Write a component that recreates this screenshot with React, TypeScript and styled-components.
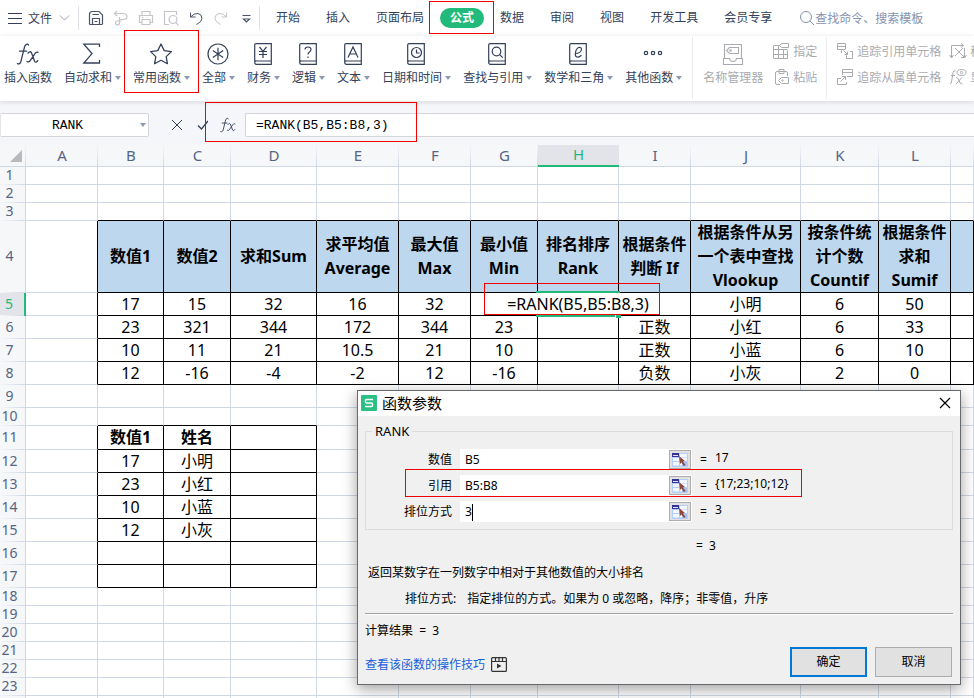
import React from "react";
import styled, { createGlobalStyle, css } from "styled-components";

const ink = "#333f59";
const muted = "#a9abb0";
const green = "#22ba7b";
const gridLine = "#d0d8e6";
const ui = '"Noto Sans", "Noto Sans CJK SC", sans-serif';

const GlobalStyle = createGlobalStyle`
  * { box-sizing: border-box; }
  body { margin: 0; font-family: ${ui}; font-size: 12px; color: ${ink}; background: #fff; }
  button, input { font: inherit; color: inherit; }
  button { background: none; border: 0; padding: 0; cursor: pointer; white-space: nowrap; }
  svg { display: block; flex: none; fill: none; stroke: currentColor; }
`;

const Window = styled.div`
  position: relative;
  display: flex;
  flex-direction: column;
  height: 100vh;
  overflow: hidden;
`;

/* Red annotation frame laid over the part it surrounds */
const Marker = styled.span<{ $top: number; $right: number; $bottom: number; $left: number }>`
  position: absolute;
  z-index: 4;
  top: ${(p) => p.$top}px;
  right: ${(p) => p.$right}px;
  bottom: ${(p) => p.$bottom}px;
  left: ${(p) => p.$left}px;
  border: 1px solid #f20000;
  pointer-events: none;
`;

/* ---------- menu bar ---------- */

const MenuBar = styled.nav`
  display: flex;
  align-items: center;
  height: 36px;
  padding-left: 8px;
`;

const FileButton = styled.button`
  display: flex;
  align-items: center;
  gap: 6px;
  margin-right: 8px;
`;

const BarRule = styled.span`
  width: 1px;
  height: 24px;
  background: #dfe2e8;
`;

const QuickTools = styled.div`
  display: flex;
  align-items: center;
  gap: 9px;
  padding: 0 5px 0 9px;
`;

const QuickButton = styled.button<{ $dim?: boolean }>`
  color: ${(p) => (p.$dim ? "#c3c5c9" : "#4a5268")};
`;

const TabList = styled.div`
  display: flex;
  align-items: center;
  padding-left: 3px;
`;

const TabSlot = styled.div`
  position: relative;
  margin: 0 3px;
`;

const Tab = styled.button<{ $active?: boolean }>`
  height: 20px;
  padding: 0 10px;
  border-radius: 10px;
  line-height: 20px;
  ${(p) => p.$active && css`background: ${green}; color: #fff; font-weight: 700;`}
`;

const Search = styled.label`
  display: flex;
  flex: 1;
  align-items: center;
  min-width: 0;
  margin-left: 14px;
  color: #8592ad;
  input {
    flex: 1;
    min-width: 0;
    padding: 0;
    border: 0;
    outline: 0;
    background: none;
  }
  input::placeholder { color: #8592ad; opacity: 1; }
`;

/* ---------- ribbon ---------- */

const Ribbon = styled.div`
  position: relative;
  z-index: 1;
  display: flex;
  height: 65px;
  white-space: nowrap;
  box-shadow: 0 1px 5px rgba(60, 70, 90, 0.18);
`;

const Tools = styled.div`
  display: flex;
  gap: 2px;
  margin-left: -1px;
`;

const Tool = styled.button<{ $dim?: boolean }>`
  position: relative;
  display: flex;
  flex-direction: column;
  align-items: center;
  gap: 2px;
  padding: 5px 5px 0;
  color: ${(p) => (p.$dim ? muted : ink)};
`;

const ToolLabel = styled.span`
  display: flex;
  align-items: center;
  gap: 3px;
  line-height: 18px;
`;

const Caret = styled.span`
  width: 6px;
  border: 3px solid transparent;
  border-top: 4px solid #8d99b3;
  border-bottom: 0;
`;

const RibbonRule = styled.span`
  flex: none;
  width: 1px;
  height: 62px;
  margin: 1px 5px 0;
  background: #e9ebef;
`;

const ToolPairs = styled.div<{ $width: number }>`
  display: flex;
  flex: none;
  flex-direction: column;
  gap: 6px;
  width: ${(p) => p.$width}px;
  padding: 5px 0 0 4px;
  color: ${muted};
`;

const SmallTool = styled.button`
  display: flex;
  align-items: center;
  gap: 3px;
  height: 20px;
`;

/* ---------- formula bar ---------- */

const FormulaBar = styled.div`
  position: relative;
  display: flex;
  align-items: center;
  height: 44px;
  padding-bottom: 8px;
  padding-top: 12px;
  background: #f5f6f9;
`;

const mono = '"Liberation Mono", "Noto Sans CJK SC", monospace';

const NameBox = styled.label`
  display: flex;
  align-items: center;
  width: 149px;
  height: 24px;
  padding-right: 2px;
  border: 1px solid #d3d5da;
  border-left-color: #e3e5e9;
  border-radius: 2px;
  background: #fff;
  input {
    flex: 1;
    min-width: 0;
    padding: 0 6px 0 0;
    border: 0;
    outline: 0;
    background: none;
    color: #000;
    font: 13px ${mono};
    text-align: center;
  }
`;

const FormulaButtons = styled.div`
  display: flex;
  flex: none;
  align-items: center;
  justify-content: space-between;
  width: 96px;
  padding: 0 8px 0 22px;
`;

const FormulaInput = styled.input`
  flex: 1;
  min-width: 0;
  height: 24px;
  padding: 0 10px;
  border: 1px solid #d3d5da;
  border-right: 0;
  border-radius: 2px 0 0 2px;
  outline: 0;
  background: #fff;
  color: #000;
  font: 13px ${mono};
`;

const FormulaMark = styled.span`
  position: absolute;
  top: 1px;
  bottom: 3px;
  left: 205px;
  z-index: 4;
  width: 212px;
  border: 1px solid #f20000;
  pointer-events: none;
`;

/* ---------- sheet ---------- */

const Sheet = styled.main`
  flex: 1;
  min-height: 0;
  overflow: hidden;
`;

const Grid = styled.table`
  width: 100%;
  table-layout: fixed;
  border-collapse: separate;
  border-spacing: 0;
`;

const Col = styled.col<{ $width?: number }>`
  width: ${(p) => (p.$width ? `${p.$width}px` : "auto")};
`;

const Row = styled.tr<{ $height: number }>`
  height: ${(p) => p.$height}px;
`;

const ColumnHead = styled.th<{ $active?: boolean }>`
  padding: 0 0 2px;
  border-bottom: ${(p) => (p.$active ? `2px solid ${green}` : `1px solid ${gridLine}`)};
  background: ${(p) =>
    p.$active
      ? "#e3e4ea"
      : `linear-gradient(#f5f6f9, ${gridLine}) right / 1px 100% no-repeat #f5f7f9`};
  color: ${(p) => (p.$active ? green : "#566585")};
  font-size: 15px;
  font-weight: 400;
  line-height: 18px;
  svg { margin: 2px 0 0 10px; stroke: none; }
`;

const RowHead = styled.th<{ $active?: boolean }>`
  padding: 0 6px 2px 0;
  border-right: ${(p) => (p.$active ? `2px solid ${green}` : `1px solid ${gridLine}`)};
  background: linear-gradient(to right, #f5f6f9, ${gridLine}) bottom / 100% 1px no-repeat
    ${(p) => (p.$active ? "#e3e4ea" : "#f5f7f9")};
  color: ${(p) => (p.$active ? green : "#566585")};
  font-size: 14px;
  font-weight: 400;
  line-height: 16px;
`;

const Cell = styled.td<{ $darkRight?: boolean; $darkBottom?: boolean; $fill?: boolean; $bold?: boolean }>`
  position: relative;
  padding: 0;
  border-right: 1px solid ${(p) => (p.$darkRight ? "#000" : gridLine)};
  border-bottom: 1px solid ${(p) => (p.$darkBottom ? "#000" : gridLine)};
  background: ${(p) => (p.$fill ? "#bdd7ee" : "#fff")};
  color: #000;
  font-size: 16px;
  font-weight: ${(p) => (p.$bold ? 700 : 400)};
  line-height: 17px;
  text-align: center;
  white-space: nowrap;
`;

const HeadText = styled.div`
  display: grid;
  align-content: center;
  justify-content: center;
  height: 71px;
  padding-bottom: 2px;
  line-height: 24px;
  white-space: pre;
`;

const Selection = styled.span`
  position: absolute;
  z-index: 1;
  inset: -2px;
  border: 2px solid ${green};
`;

const FillHandle = styled.span`
  position: absolute;
  z-index: 3;
  right: -3px;
  bottom: -3px;
  width: 6px;
  height: 3px;
  border-left: 1px solid #fff;
  background: ${green};
`;

const CellEditor = styled.input`
  position: absolute;
  z-index: 2;
  top: 0;
  left: -38px;
  width: 156px;
  height: 100%;
  padding: 0;
  border: 0;
  outline: 0;
  background: #fff;
  text-align: center;
`;

/* ---------- dialog ---------- */

const Dialog = styled.section`
  position: absolute;
  top: 390px;
  right: 13px;
  z-index: 10;
  width: 604px;
  border: 1px solid #68696b;
  background: #f0f0f0;
  color: #000;
  line-height: 16px;
  box-shadow: 0 4px 14px rgba(0, 0, 0, 0.38);
`;

const TitleBar = styled.header`
  display: flex;
  align-items: center;
  gap: 5px;
  height: 25px;
  padding: 0 9px 1px 3px;
  background: #fff;
  h2 { flex: 1; margin: 0; font-size: 15px; font-weight: 400; line-height: 20px; }
`;

const DialogBody = styled.form`
  padding: 7px;
`;

const Arguments = styled.fieldset`
  display: block;
  margin: 0;
  padding: 10px 0 7px;
  border: 1px solid #dcdcdc;
  legend { margin-left: 6px; padding: 0 3px; font-size: 13px; line-height: 16px; }
`;

const ArgRow = styled.div`
  position: relative;
  display: grid;
  grid-template-columns: 86px 232px 7px 1fr;
  column-gap: 8px;
  align-items: center;
  height: 21px;
  & + & { margin-top: 5px; }
  label { text-align: right; }
  output { padding-bottom: 4px; }
`;

const ArgField = styled.div`
  display: flex;
  align-items: center;
  height: 21px;
  padding-right: 1px;
  background: #fff;
  input { flex: 1; min-width: 0; padding: 0 5px; border: 0; outline: 0; background: none; }
`;

const Typed = styled.div`
  position: relative;
  display: flex;
  flex: 1;
  min-width: 0;
`;

const TextCursor = styled.span`
  position: absolute;
  top: 0;
  left: 12px;
  width: 1px;
  height: 17px;
  background: #000;
`;

const PickButton = styled.button`
  display: grid;
  place-items: center;
  width: 22px;
  height: 19px;
  border: 1px solid #adadad;
  background: #e1e1e1;
  svg { stroke: none; }
`;

const Total = styled.p`
  margin: 8px 0 11px 331px;
  white-space: pre;
`;

const Summary = styled.p`
  margin: 0 0 10px 3px;
`;

const Hint = styled.dl`
  display: flex;
  gap: 11px;
  margin: 0 0 6px 40px;
  dd { margin: 0; }
`;

const Divider = styled.hr`
  height: 2px;
  margin: 0 0 8px;
  border: 0;
  border-top: 1px solid #a0a0a0;
  border-bottom: 1px solid #fff;
`;

const Result = styled.p`
  margin: 0;
  white-space: pre;
`;

const Footer = styled.footer`
  display: flex;
  align-items: center;
  gap: 8px;
  margin-top: 8px;
  padding-right: 1px;
`;

const HelpLink = styled.a`
  display: flex;
  flex: 1;
  align-items: center;
  gap: 6px;
  padding-top: 5px;
  color: #1a5fdc;
  text-decoration: none;
  svg { color: #333; }
`;

const PushButton = styled.button<{ $primary?: boolean }>`
  width: 77px;
  height: 30px;
  border: ${(p) => (p.$primary ? "2px solid #0078d7" : "1px solid #adadad")};
  background: #e1e1e1;
`;

/* ---------- icons ---------- */

const Svg = ({ w, h = w, children, sw = 1 }: { w: number; h?: number; sw?: number; children: React.ReactNode }) => (
  <svg width={w} height={h} viewBox={`0 0 ${w} ${h}`} strokeWidth={sw} aria-hidden="true">
    {children}
  </svg>
);

const FxIcon = ({ w = 26, h = 26 }: { w?: number; h?: number }) => (
  <svg width={w} height={h} viewBox="0 0 26 26" strokeWidth="1.3" strokeLinecap="round" aria-hidden="true">
    <path d="M13.5 4C12.5 2.6 10.4 3 9.6 5.6L6 20.2C5.3 22.6 4 23.4 2.4 22.6M4.6 10.2h7" />
    <path d="M13 12.2c1-1.5 2.5-2 3.4-.6l3.2 8.6c.8 1.5 2 1.2 3.2-.5M23 11.3c-1.2-.6-2 .1-2.8 1L14.8 20c-.8 1-1.8 1.1-2.8.5" />
  </svg>
);

const Book = ({ children }: { children: React.ReactNode }) => (
  <Svg w={26}>
    <g transform="translate(3 2)" strokeWidth="1.2">
      <path d="M.7 18.5V2Q.7.7 2 .7H17.3V21.3H2.5Q.7 21.3.7 19.5T2.5 18H17" />
      {children}
    </g>
  </Svg>
);

const icons = {
  fx: <FxIcon />,
  sum: (
    <Svg w={26} sw={1.3}><path d="M19.5 6V3.2H3.8L12 12.6 3.8 22H19.5V19" /></Svg>
  ),
  star: (
    <Svg w={26} sw={1.3}>
      <path strokeLinejoin="round" d="M12 3l3.2 6.6 7.2 1-5.2 5 1.2 7.1L12 19.3l-6.4 3.4 1.2-7.1-5.2-5 7.2-1z" />
    </Svg>
  ),
  all: (
    <Svg w={26} sw={1.2}>
      <circle cx="12" cy="13" r="10" /><path d="M12 6.8v12.4M6.8 9.6l10.4 6.8M17.2 9.6L6.8 16.4" />
    </Svg>
  ),
  money: <Book><path d="M5.5 4L9 8.3 12.5 4M5 8.5h8M5 11.5h8M9 8.5V15" /></Book>,
  logic: <Book><path d="M6 6.5Q6 4 9 4t3 2.6q0 1.4-1.5 2.3T9 11.5M9 13.5v1.5" /></Book>,
  text: <Book><path d="M4 14.5L9 4l5 10.5M5.7 11h6.6" /></Book>,
  time: <Book><circle cx="9.5" cy="9.5" r="5" /><path d="M9.5 6.5V10H12.5" /></Book>,
  find: <Book><circle cx="8.5" cy="8.5" r="4.3" /><path d="M11.7 11.7l3 3" /></Book>,
  math: <Book><path d="M6 10.5C10 10.5 12.5 8.5 12.5 6.3S9.5 3.7 7.8 6 5.5 13.5 8 14s3.500-.8 4.500-2" /></Book>,
  more: (
    <Svg w={26} sw={1.2}><circle cx="5" cy="12" r="1.7" /><circle cx="12" cy="12" r="1.7" /><circle cx="19" cy="12" r="1.7" /></Svg>
  ),
  names: (
    <Svg w={26} sw={1.1}>
      <path d="M4.5 17.5V3.5h17v14M3.500 17.5h6q.5 3 3.500 3t3.500-3h6v6h-19z" />
      <path d="M9.500 6.500h9v6h-9l-3-3z" /><circle cx="10.500" cy="9.500" r=".8" />
    </Svg>
  ),
};

const assignIcon = (
  <Svg w={18}>
    <path d="M7.5 3.5h-6v13h14v-8M1.5 7.5h14M1.5 12.5h14M6.5 3.5v13M11.5 8v8.5M9.5 1.5h7v4h-7l-2-2z" />
  </Svg>
);
const pasteIcon = (
  <Svg w={18}>
    <path d="M8 16.5H5q-1.5 0-1.5-1.5V5q0-1.5 1.5-1.5h9q1.5 0 1.5 1.5v3M7 5.5h5v-4H7zM16.5 9.5v6h-7l-3-3 3-3z" /><circle cx="10.5" cy="12.5" r=".7" />
  </Svg>
);
const precedentIcon = (
  <Svg w={18}><path d="M9.5 7.5h-8v-6h8V7M1.5 4.5h8M5.5 8v3M10.5 16.5v-3M7.5 8.5l4 4M11.5 9.5v3h-3M14 9.5h2.5v7h-6v-2" /></Svg>
);
const dependentIcon = (
  <Svg w={18}><path d="M6.5 7V1.5h10v7H11M6.5 4.5h10M6.5 8.5H9M5 10.5H1.5v6h9V14M4.5 13.5l5-5M6 8.5h3.5V12" /></Svg>
);
const removeArrowsIcon = (
  <Svg w={18}><path d="M2.5 15V3.5H14M12 1.5l2.5 2-2.5 2M.5 13l2 3 2-3M6 6l8 8M14 6l-8 8M15.5 6v9.5H12M13.5 13l2 3 2-3" /></Svg>
);
const showFormulaIcon = (
  <Svg w={18}><path d="M6.5 3q-2-1-2.5 1.5L2.5 14q-.5 2-1.5 1.5M2 7.5h4M7 9.5l2 1 2.5 5 2 .5M13 9.5l-6 6.5" /><ellipse cx="12.5" cy="4.5" rx="4.5" ry="3" /><circle cx="12.5" cy="4.5" r="1.2" /></Svg>
);

const pickIcon = (
  <Svg w={16} h={14}>
    <rect width="16" height="14" fill="#b5cdfb" />
    <path d="M1 5h6v3H1zM1 9h6v3.5H1zM8 1h7v3.5H8zM8 5h7v3H8zM8 9h7v3.5H8z" fill="#f3f7ff" />
    <path d="M10 9h5v4h-5z" fill="#a6c1f2" />
    <path d="M0 0h7v4H0z" fill="#33339a" />
    <path d="M1 2h5v1H1z" fill="#e3e6f5" />
    <path d="M7 3l6 5-2 .4 2.5 3.6-1.6 1L9.5 9.4 8 11z" fill="#8e4b37" />
  </Svg>
);

/* ---------- data ---------- */

type ToolItem = { label: string; icon: React.ReactNode; menu?: boolean; marked?: boolean };

const tools: ToolItem[] = [
  { label: "插入函数", icon: icons.fx },
  { label: "自动求和", icon: icons.sum, menu: true },
  { label: "常用函数", icon: icons.star, menu: true, marked: true },
  { label: "全部", icon: icons.all, menu: true },
  { label: "财务", icon: icons.money, menu: true },
  { label: "逻辑", icon: icons.logic, menu: true },
  { label: "文本", icon: icons.text, menu: true },
  { label: "日期和时间", icon: icons.time, menu: true },
  { label: "查找与引用", icon: icons.find, menu: true },
  { label: "数学和三角", icon: icons.math, menu: true },
  { label: "其他函数", icon: icons.more, menu: true },
];

const tabs = ["开始", "插入", "页面布局", "公式", "数据", "审阅", "视图", "开发工具", "会员专享"];

const columns = ["A", "B", "C", "D", "E", "F", "G", "H", "I", "J", "K", "L", ""];
const columnWidths = [72, 66, 67, 86, 82, 72, 67, 81, 72, 110, 78, 72];

const values: Record<number, string[]> = {
  4: ["", "数值1", "数值2", "求和Sum", "求平均值\nAverage", "最大值\nMax", "最小值\nMin", "排名排序\nRank", "根据条件\n判断 If", "根据条件从另\n一个表中查找\nVlookup", "按条件统\n计个数\nCountif", "根据条件\n求和\nSumif"],
  5: ["", "17", "15", "32", "16", "32", "", "", "", "小明", "6", "50"],
  6: ["", "23", "321", "344", "172", "344", "23", "", "正数", "小红", "6", "33"],
  7: ["", "10", "11", "21", "10.5", "21", "10", "", "正数", "小蓝", "6", "10"],
  8: ["", "12", "-16", "-4", "-2", "12", "-16", "", "负数", "小灰", "2", "0"],
  11: ["", "数值1", "姓名"],
  12: ["", "17", "小明"],
  13: ["", "23", "小红"],
  14: ["", "10", "小蓝"],
  15: ["", "12", "小灰"],
};

const rowHeight = (row: number) => {
  if (row === 4) return 72;
  if (row === 11) return 24;
  return (row >= 5 && row <= 9) || (row >= 12 && row <= 17) ? 23 : 18;
};

/* Black rules run round two blocks: B4:M8 and B11:D17 */
const inBlock = (row: number, col: number) =>
  (row >= 4 && row <= 8 && col >= 1) || (row >= 11 && row <= 17 && col >= 1 && col <= 3);

/* The last row is an unnumbered filler below row 23 */
const lastRow = 23;
const rows = Array.from({ length: lastRow + 1 }, (_, i) => i + 1);

const args = [
  { id: "number", label: "数值", value: "B5", result: "17" },
  { id: "ref", label: "引用", value: "B5:B8", result: "{17;23;10;12}", marked: true },
  { id: "order", label: "排位方式", value: "3", result: "3", focused: true },
];

/* ---------- parts ---------- */

const TopMenu = () => (
  <MenuBar>
    <FileButton>
      <Svg w={14} h={12}><path d="M0 1.5h14M0 6.5h14M0 11.5h14" /></Svg>
      文件
      <Svg w={12} h={8}><path d="M2 1.5l4.5 4.5L11 1.5" stroke="#9aa0ae" /></Svg>
    </FileButton>
    <BarRule />
    <QuickTools>
      <QuickButton aria-label="保存">
        <Svg w={16}><path d="M1.5 4.5q0-3 3-3h6.500l3.500 3.500v8.500q0 1-1 1h-11q-1 0-1-1zM4.500 14V8.500h7V14M4.500 4.500h6.500M6.500 11.500h3" strokeWidth="1.2" /></Svg>
      </QuickButton>
      <QuickButton $dim aria-label="输出为PDF">
        <Svg w={16} sw={1.2}><path d="M2 3.5h8q4 0 4 3t-4 3H6M4 1L1.5 3.5 4 6M6.5 7v6q0 2-2 2t-2-2 2-2h4" /></Svg>
      </QuickButton>
      <QuickButton $dim aria-label="打印">
        <Svg w={16} sw={1.2}><path d="M4 5V1.5h8V5M4 12.5H1.5v-7h13v7H12M4 9.5h8v5H4zM4 7.5h1" /></Svg>
      </QuickButton>
      <QuickButton $dim aria-label="打印预览">
        <Svg w={16} sw={1.2}><path d="M6 14.5H1.5v-13h12V5" /><circle cx="10" cy="9.5" r="4" /><path d="M12.8 12.3l2.7 3" /></Svg>
      </QuickButton>
      <QuickButton aria-label="撤销">
        <Svg w={16}><path d="M2.500 2.500v4.500h5M2.500 7Q6 3 10 3.500q4 .8 4 4.800 0 3.500-5.500 6.200" /></Svg>
      </QuickButton>
      <QuickButton $dim aria-label="恢复">
        <Svg w={16}><path d="M13.500 2.500v4.500h-5M13.500 7Q10 3 6 3.500 2 4.300 2 8.300q0 3.500 5.500 6.200" /></Svg>
      </QuickButton>
      <QuickButton aria-label="更多">
        <Svg w={16} sw={1.2}><path d="M4.5 5.5h8M5.5 9l3 3 3-3z" /></Svg>
      </QuickButton>
    </QuickTools>
    <BarRule />
    <TabList>
      {tabs.map((tab) => (
        <TabSlot key={tab}>
          <Tab $active={tab === "公式"}>{tab}</Tab>
          {tab === "公式" && <Marker $top={-7} $right={-10} $bottom={-6} $left={-11} />}
        </TabSlot>
      ))}
    </TabList>
    <Search>
      <Svg w={16}><circle cx="7" cy="7" r="5.5" /><path d="M11 11l4 4" /></Svg>
      <input aria-label="查找命令" placeholder="查找命令、搜索模板" />
    </Search>
  </MenuBar>
);

const RibbonBar = () => (
  <Ribbon>
    <Tools>
      {tools.map((t) => (
        <Tool key={t.label}>
          {t.icon}
          <ToolLabel>{t.label}{t.menu && <Caret />}</ToolLabel>
          {t.marked && <Marker $top={-6} $right={-4} $bottom={8} $left={-4} />}
        </Tool>
      ))}
    </Tools>
    <RibbonRule />
    <Tool $dim>
      {icons.names}
      <ToolLabel>名称管理器</ToolLabel>
    </Tool>
    <ToolPairs $width={53}>
      <SmallTool>{assignIcon}指定</SmallTool>
      <SmallTool>{pasteIcon}粘贴</SmallTool>
    </ToolPairs>
    <RibbonRule />
    <ToolPairs $width={113}>
      <SmallTool>{precedentIcon}追踪引用单元格</SmallTool>
      <SmallTool>{dependentIcon}追踪从属单元格</SmallTool>
    </ToolPairs>
    <ToolPairs $width={80}>
      <SmallTool>{removeArrowsIcon}移去箭头</SmallTool>
      <SmallTool>{showFormulaIcon}显示公式</SmallTool>
    </ToolPairs>
  </Ribbon>
);

const FormulaRow = () => (
  <FormulaBar>
    <NameBox>
      <input aria-label="名称框" defaultValue="RANK" />
      <Caret />
    </NameBox>
    <FormulaButtons>
      <button aria-label="取消输入"><Svg w={12}><path d="M1 1l10 10M11 1L1 11" /></Svg></button>
      <button aria-label="确认输入"><Svg w={14} h={12} sw={1.3}><path d="M4 6.5L7.5 10 14 2" /></Svg></button>
      <button aria-label="函数"><FxIcon w={18} h={18} /></button>
    </FormulaButtons>
    <FormulaInput aria-label="编辑栏" defaultValue="=RANK(B5,B5:B8,3)" />
    <FormulaMark />
  </FormulaBar>
);

const SheetGrid = () => (
  <Sheet>
    <Grid>
      <colgroup>
        <Col $width={26} />
        {columns.map((c, i) => <Col key={i} $width={columnWidths[i]} />)}
      </colgroup>
      <thead>
        <Row $height={22}>
          <ColumnHead><Svg w={12}><path d="M12 0v12H0z" fill="#b8b9bd" /></Svg></ColumnHead>
          {columns.map((c, i) => <ColumnHead key={i} scope="col" $active={c === "H"}>{c}</ColumnHead>)}
        </Row>
      </thead>
      <tbody>
        {rows.map((row) => (
          <Row key={row} $height={rowHeight(row)}>
            <RowHead scope="row" $active={row === 5}>{row <= lastRow ? row : ""}</RowHead>
            {columns.map((_, col) => {
              const text = values[row]?.[col] ?? "";
              return (
                <Cell
                  key={col}
                  $darkRight={inBlock(row, col) || inBlock(row, col + 1)}
                  $darkBottom={inBlock(row, col) || inBlock(row + 1, col)}
                  $fill={row === 4 && col >= 1}
                  $bold={row === 4 || row === 11}
                >
                  {row === 4 ? <HeadText>{text}</HeadText> : text}
                  {row === 5 && col === 7 && (
                    <>
                      <Selection />
                      <CellEditor aria-label="H5" defaultValue="=RANK(B5,B5:B8,3)" />
                      <FillHandle />
                      <Marker $top={-10} $right={-42} $bottom={0} $left={-54} />
                    </>
                  )}
                </Cell>
              );
            })}
          </Row>
        ))}
      </tbody>
    </Grid>
  </Sheet>
);

const ArgumentsDialog = () => (
  <Dialog role="dialog" aria-labelledby="dialog-title">
    <TitleBar>
      <Svg w={16}>
        <rect width="16" height="16" rx="1" fill="#2bbf83" stroke="none" />
        <path d="M12 4.5H5.5q-1 0-1 1V7q0 1 1 1h5q1 0 1 1v1.5q0 1-1 1H4" stroke="#fff" strokeWidth="1.4" />
      </Svg>
      <h2 id="dialog-title">函数参数</h2>
      <button aria-label="关闭"><Svg w={12} sw={1.2}><path d="M1 1l10 10M11 1L1 11" /></Svg></button>
    </TitleBar>
    <DialogBody onSubmit={(e) => e.preventDefault()}>
      <Arguments>
        <legend>RANK</legend>
        {args.map((a) => (
          <ArgRow key={a.id}>
            <label htmlFor={a.id}>{a.label}</label>
            <ArgField>
              <Typed>
                <input id={a.id} defaultValue={a.value} />
                {a.focused && <TextCursor />}
              </Typed>
              <PickButton type="button" aria-label="选择区域">{pickIcon}</PickButton>
            </ArgField>
            <span>=</span>
            <output htmlFor={a.id}>{a.result}</output>
            {a.marked && <Marker $top={-6} $right={150} $bottom={-1} $left={39} />}
          </ArgRow>
        ))}
      </Arguments>
      <Total>{"=  3"}</Total>
      <Summary>返回某数字在一列数字中相对于其他数值的大小排名</Summary>
      <Hint>
        <dt>排位方式:</dt>
        <dd>指定排位的方式。如果为 0 或忽略，降序；非零值，升序</dd>
      </Hint>
      <Divider />
      <Result>{"计算结果  =  3"}</Result>
      <Footer>
        <HelpLink href="#help">
          查看该函数的操作技巧
          <Svg w={16} h={15} sw={1.2}>
            <rect x=".6" y=".6" width="14.8" height="13.8" rx="1" />
            <path d="M1 4.5h14M4.5 1v3M8 1v3M11.5 1v3" />
            <path d="M6 6.5v5L10.5 9z" fill="currentColor" stroke="none" />
          </Svg>
        </HelpLink>
        <PushButton $primary type="submit">确定</PushButton>
        <PushButton type="button">取消</PushButton>
      </Footer>
    </DialogBody>
  </Dialog>
);

export default function App() {
  return (
    <Window>
      <GlobalStyle />
      <TopMenu />
      <RibbonBar />
      <FormulaRow />
      <SheetGrid />
      <ArgumentsDialog />
    </Window>
  );
}
